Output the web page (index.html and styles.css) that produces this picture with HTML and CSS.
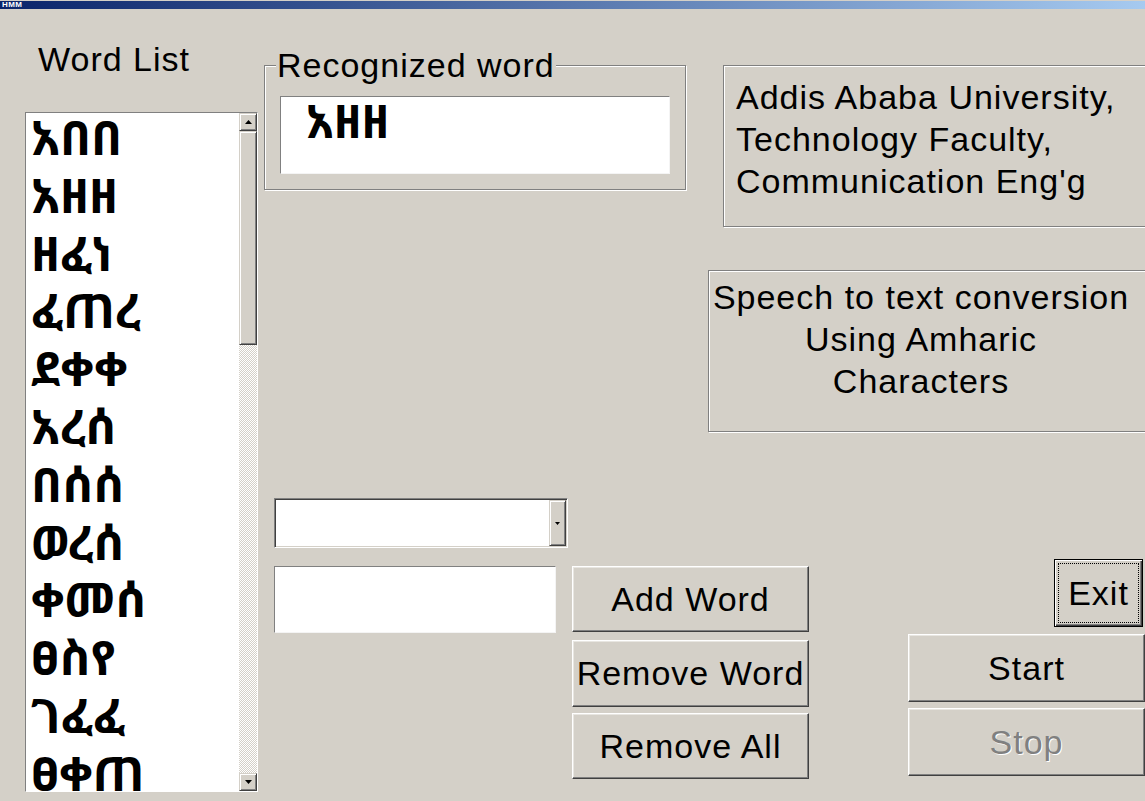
FILE: index.html
```html
<!DOCTYPE html>
<html lang="am">
<head>
<meta charset="utf-8">
<title>HMM</title>
<link rel="stylesheet" href="styles.css">
</head>
<body>
<div class="window">
  <header class="titlebar"><span class="title">HMM</span></header>
  <div class="client">
    <section class="words">
      <div class="words-label" lang="en">Word List</div>
      <div class="listbox">
        <ul class="list-items">
          <li>አበበ</li>
          <li>አዘዘ</li>
          <li>ዘፈነ</li>
          <li>ፈጠረ</li>
          <li>ደቀቀ</li>
          <li>አረሰ</li>
          <li>በሰሰ</li>
          <li>ወረሰ</li>
          <li>ቀመሰ</li>
          <li>ፀስየ</li>
          <li>ገፈፈ</li>
          <li>ፀቀጠ</li>
        </ul>
        <div class="vscroll">
          <div class="sb-btn"><svg width="7" height="4" viewBox="0 0 7 4"><path d="M3.5 0L7 4H0z"/></svg></div>
          <div class="sb-thumb"></div>
          <div class="sb-track"></div>
          <div class="sb-btn"><svg width="7" height="4" viewBox="0 0 7 4"><path d="M0 0H7L3.5 4z"/></svg></div>
        </div>
      </div>
    </section>

    <div class="main" lang="en">
      <div class="upper">
        <fieldset class="groupbox">
          <legend>Recognized word</legend>
          <div class="edit result" lang="am">አዘዘ</div>
        </fieldset>
        <div class="info">
          <div class="static credits">Addis Ababa University,<br>Technology Faculty,<br>Communication Eng'g</div>
          <div class="static caption"><div class="caption-text">Speech to text conversion<br>Using Amharic<br>Characters</div></div>
        </div>
      </div>

      <div class="lower">
        <div class="entry">
          <div class="combo">
            <div class="combo-field"></div>
            <div class="combo-btn"><svg width="5" height="3" viewBox="0 0 5 3"><path d="M0 0H5L2.5 3z"/></svg></div>
          </div>
          <div class="edit new-word"></div>
        </div>
        <div class="actions">
          <button class="btn add">Add Word</button>
          <button class="btn remove">Remove Word</button>
          <button class="btn remove-all">Remove All</button>
        </div>
        <div class="run">
          <button class="btn default exit"><span class="focus">Exit</span></button>
          <button class="btn start">Start</button>
          <button class="btn stop" disabled>Stop</button>
        </div>
      </div>
    </div>
  </div>
</div>
</body>
</html>
```

FILE: styles.css
```css
* {
  box-sizing: border-box;
}

html,
body {
  margin: 0;
  padding: 0;
}

body {
  width: 1145px;
  height: 801px;
  overflow: hidden;
  background: #d4d0c8;
  color: #000;
  font-family: "Liberation Sans", Arial, sans-serif;
  font-size: 34px;
  letter-spacing: 1px;
}

.window {
  height: 801px;
  padding-top: 1px;
}

/* caption bar */
.titlebar {
  height: 8px;
  display: flex;
  align-items: center;
  padding-left: 2px;
  background: linear-gradient(to right, #0a246a, #a6caf0);
}

.title {
  color: #fff;
  font: bold 8px/8px "Liberation Sans", Arial, sans-serif;
  letter-spacing: 0.4px;
}

.client {
  display: flex;
  align-items: flex-start;
}

.client > *,
.upper > *,
.lower > *,
.info > * {
  flex: none;
}

/* word list column */
.words {
  margin-left: 25px;
  width: 233px;
}

.words-label {
  margin-top: 30px;
  padding-left: 13px;
  line-height: 40px;
}

.listbox {
  margin-top: 33px;
  height: 680px;
  display: flex;
  background: #fff;
  border: 1px solid;
  border-color: #808080 #fff #fff #808080;
}

.list-items {
  flex: 1;
  margin: 0;
  padding: 0 0 0 5px;
  list-style: none;
  overflow: hidden;
  font: bold 48px/48px "Noto Sans Ethiopic", "Abyssinica SIL", "DejaVu Sans", sans-serif;
  letter-spacing: 0;
}

.list-items li {
  height: 57.8px;
}

.vscroll {
  flex: none;
  width: 18px;
  display: flex;
  flex-direction: column;
}

.sb-btn,
.sb-thumb,
.combo-btn {
  flex: none;
  background: #d4d0c8;
  border: 1px solid;
  border-color: #d4d0c8 #404040 #404040 #d4d0c8;
  box-shadow: inset 1px 1px #fff, inset -1px -1px #808080;
}

.sb-btn {
  height: 18px;
  display: flex;
  align-items: center;
  justify-content: center;
}

.sb-thumb {
  height: 214px;
}

.sb-track {
  flex: 1;
  background-color: #fff;
  background-image: repeating-conic-gradient(#d4d0c8 0 25%, #fff 0 50%);
  background-size: 2px 2px;
}

/* main area */
.main {
  margin-left: 6px;
  display: flex;
  flex-direction: column;
}

.upper {
  display: flex;
  align-items: flex-start;
}

.groupbox {
  margin: 38px 0 0;
  padding: 13px 15px 15px 15px;
  width: 422px;
  min-width: 0;
  border: 1px solid #808080;
  box-shadow: inset 1px 1px #fff, 1px 1px #fff;
}

.groupbox legend {
  margin-left: -4px;
  padding: 0 1px;
  line-height: 36px;
  background: #d4d0c8;
}

.edit {
  background: #fff;
  border: 1px solid;
  border-color: #808080 #f4f4f4 #f4f4f4 #808080;
}

.result {
  height: 78px;
  padding: 0 0 0 25px;
  font: bold 46px/46px "Noto Sans Ethiopic", "Abyssinica SIL", "DejaVu Sans", sans-serif;
  letter-spacing: 0;
}

.info {
  margin-left: 22px;
  display: flex;
  flex-direction: column;
}

.static {
  border: 1px solid #808080;
  box-shadow: inset 1px 1px #fff, 1px 1px #fff;
  line-height: 42px;
}

.credits {
  margin: 56px 0 0 15px;
  width: 437px;
  height: 162px;
  padding: 10px 0 0 12px;
}

.caption {
  margin-top: 43px;
  width: 452px;
  height: 162px;
  padding: 5px 26px 0 0;
  text-align: center;
}

/* lower controls */
.lower {
  margin-top: 66px;
  display: flex;
  align-items: flex-start;
}

.entry {
  margin-left: 10px;
  width: 298px;
  display: flex;
  flex-direction: column;
}

.combo {
  width: 294px;
  height: 50px;
  display: flex;
  background: #fff;
  border: 1px solid;
  border-color: #808080 #fff #fff #808080;
  box-shadow: inset 1px 1px #404040, inset -1px -1px #d4d0c8;
  padding: 1px;
}

.combo-field {
  flex: 1;
}

.combo-btn {
  width: 17px;
  display: flex;
  align-items: center;
  justify-content: center;
}

.new-word {
  margin-top: 18px;
  width: 282px;
  height: 67px;
}

.actions,
.run {
  display: flex;
  flex-direction: column;
}

.actions {
  width: 237px;
  margin-top: 68px;
}

.btn {
  flex: none;
  display: flex;
  align-items: center;
  justify-content: center;
  padding: 0;
  margin: 0;
  font: inherit;
  letter-spacing: inherit;
  color: #000;
  background: #d4d0c8;
  border: 1px solid;
  border-color: #fff #404040 #404040 #fff;
  box-shadow: inset -1px -1px #808080, inset 1px 1px #e8e6e1;
}

.add {
  height: 66px;
}

.remove {
  height: 67px;
  margin-top: 8px;
}

.remove-all {
  height: 66px;
  margin-top: 6px;
}

.run {
  margin: 61px 0 0 99px;
  width: 237px;
  align-items: flex-end;
}

.exit {
  width: 89px;
  height: 68px;
  margin-right: 2px;
  border: 1px solid #000;
  box-shadow: inset 1px 1px #fff, inset -1px -1px #404040, inset -2px -2px #808080;
  padding: 4px;
}

.focus {
  flex: 1;
  align-self: stretch;
  display: flex;
  align-items: center;
  justify-content: center;
  outline: 1px dotted #000;
}

.start,
.stop {
  width: 237px;
  height: 68px;
}

.start {
  margin-top: 7px;
}

.stop {
  margin-top: 6px;
  color: #808080;
  text-shadow: 1px 1px #fff;
}
```
